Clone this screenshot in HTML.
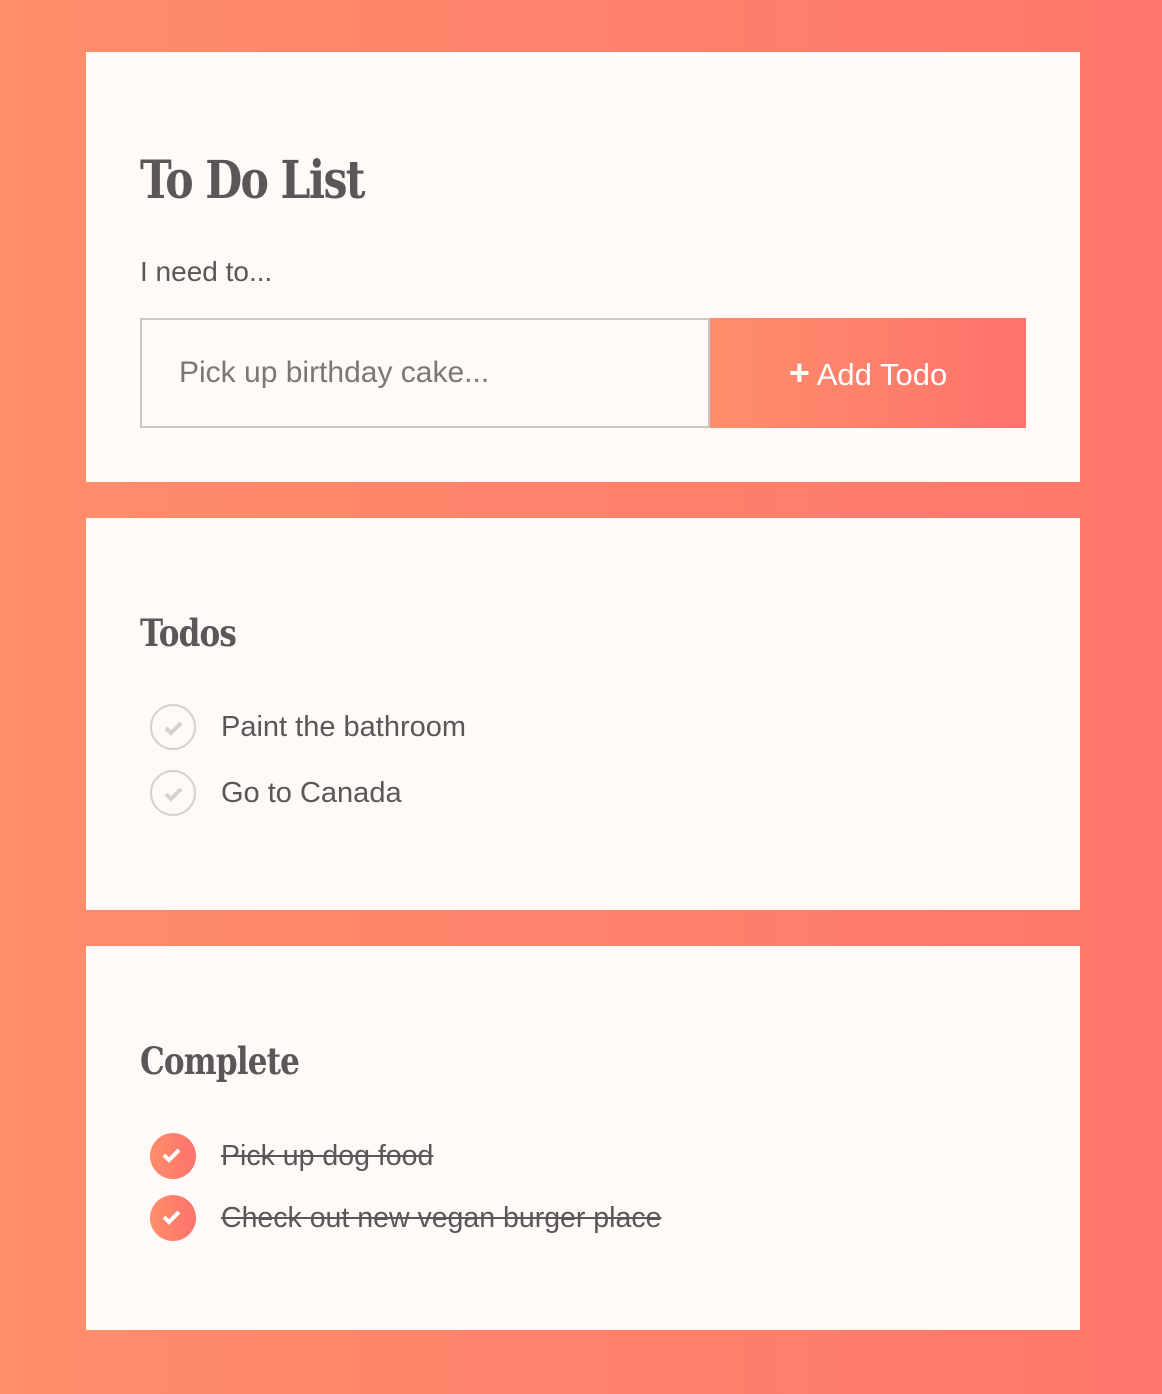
<!DOCTYPE html>
<html><head><style>
body{margin:0;width:1162px;height:1394px;background:linear-gradient(90deg,#ff8e6a,#ff766c);font-family:"Liberation Sans",sans-serif;position:relative;overflow:hidden}
.card{position:absolute;left:86px;width:994px;background:#fff9f7}
h1,h2{font-family:"DejaVu Serif",serif;color:#5b5657;margin:0;position:absolute;left:54px;font-weight:bold;white-space:nowrap;transform-origin:left top}
h1{font-size:52px;top:98px;letter-spacing:-2px;transform:scaleX(.82)}
h2{font-size:37px;top:93px;letter-spacing:-1px;transform:scaleX(.84)}
.lbl{position:absolute;left:54px;top:204px;font-size:28px;color:#5b5657}
.inp{position:absolute;left:54px;top:266px;width:570px;height:110px;border:2px solid #ccc6c4;box-sizing:border-box;font-size:30px;color:#7b7777;line-height:106px;padding-left:37px}
.btn{position:absolute;left:624px;top:266px;width:316px;height:110px;background:linear-gradient(90deg,#ff8e6a,#ff726c);color:#fff;font-size:31px;text-align:center;line-height:110px}
.it{position:absolute;left:64px;height:46px;font-size:29px;color:#5b5657;line-height:46px}
.it span.c{position:absolute;left:0;top:0;width:46px;height:46px;border-radius:50%;box-sizing:border-box;border:2px solid #d6d0ce}
.it span.c svg{position:absolute;left:11px;top:12px}
.it .t{position:absolute;left:71px;white-space:nowrap}
.done{font-size:28.5px}
.done span.c{border:none;background:linear-gradient(90deg,#ff8e6a,#ff726c)}
.done .t{text-decoration:line-through}
</style></head><body>
<div class="card" style="top:52px;height:430px">
<h1>To Do List</h1>
<div class="lbl">I need to...</div>
<div class="inp">Pick up birthday cake...</div>
<div class="btn"><b style="font-size:36px">+</b> Add Todo</div>
</div>
<div class="card" style="top:518px;height:392px">
<h2>Todos</h2>
<div class="it" style="top:186px"><span class="c"><svg width="22" height="20"><path d="M3 10l5 5 10-10" stroke="#d6d0ce" stroke-width="4" fill="none"/></svg></span><span class="t">Paint the bathroom</span></div>
<div class="it" style="top:252px"><span class="c"><svg width="22" height="20"><path d="M3 10l5 5 10-10" stroke="#d6d0ce" stroke-width="4" fill="none"/></svg></span><span class="t">Go to Canada</span></div>
</div>
<div class="card" style="top:946px;height:384px">
<h2>Complete</h2>
<div class="it done" style="top:187px"><span class="c"><svg width="24" height="22" style="left:11px;top:12px"><path d="M3 10l5 5 10-10" stroke="#fff" stroke-width="4" fill="none"/></svg></span><span class="t">Pick up dog food</span></div>
<div class="it done" style="top:249px"><span class="c"><svg width="24" height="22" style="left:11px;top:12px"><path d="M3 10l5 5 10-10" stroke="#fff" stroke-width="4" fill="none"/></svg></span><span class="t">Check out new vegan burger place</span></div>
</div>
</body></html>
